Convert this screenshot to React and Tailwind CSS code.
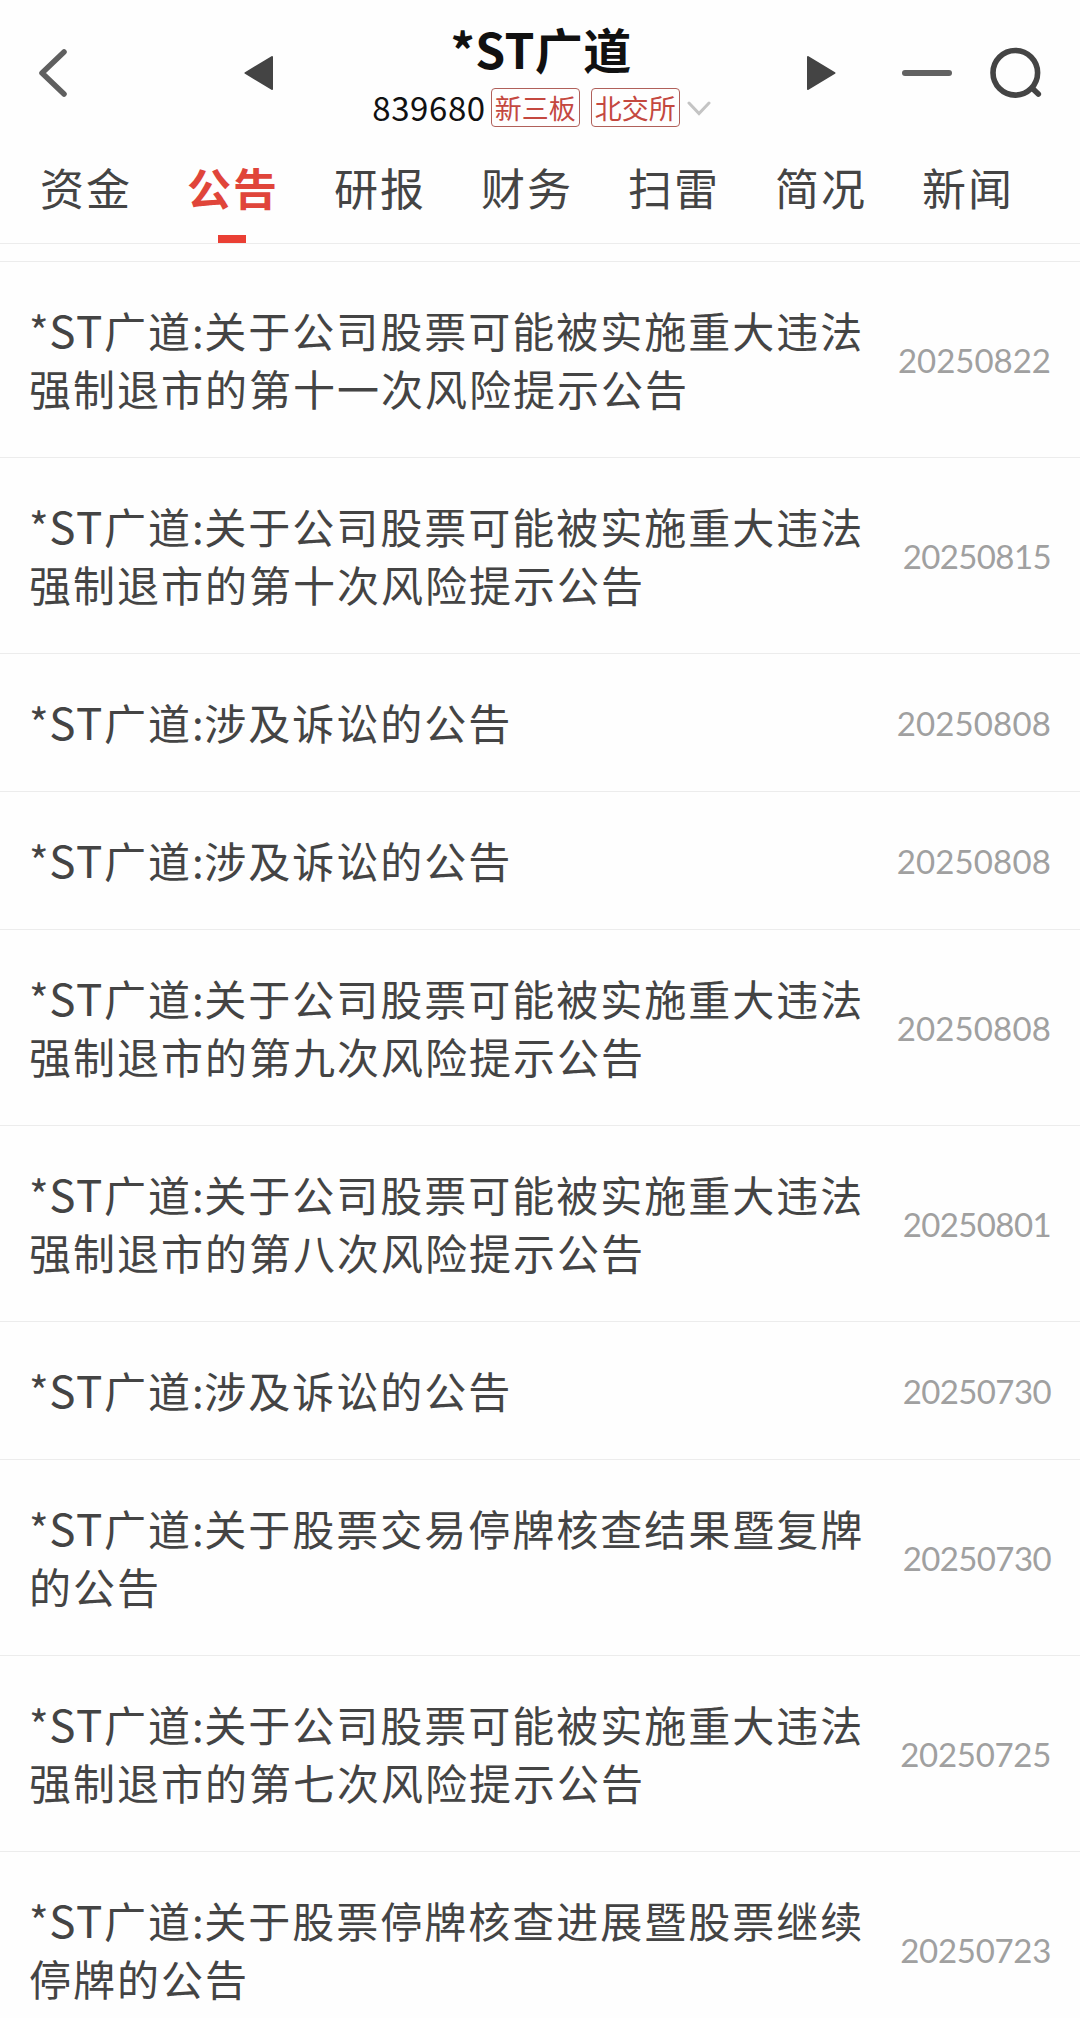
import { useState } from "react";

const TABS = ["资金", "公告", "研报", "财务", "扫雷", "简况", "新闻"];

const NOTICES = [
  { id: 1, lines: ["关于公司股票可能被实施重大违法", "强制退市的第十一次风险提示公告"], date: "20250822", spacing: "tracking-[0px]" },
  { id: 2, lines: ["关于公司股票可能被实施重大违法", "强制退市的第十次风险提示公告"], date: "20250815", spacing: "tracking-[-0.6px]" },
  { id: 3, lines: ["涉及诉讼的公告"], date: "20250808", spacing: "tracking-[0.15px]" },
  { id: 4, lines: ["涉及诉讼的公告"], date: "20250808", spacing: "tracking-[0.15px]" },
  { id: 5, lines: ["关于公司股票可能被实施重大违法", "强制退市的第九次风险提示公告"], date: "20250808", spacing: "tracking-[0.15px]" },
  { id: 6, lines: ["关于公司股票可能被实施重大违法", "强制退市的第八次风险提示公告"], date: "20250801", spacing: "tracking-[-0.6px]" },
  { id: 7, lines: ["涉及诉讼的公告"], date: "20250730", spacing: "tracking-[-0.6px]" },
  { id: 8, lines: ["关于股票交易停牌核查结果暨复牌", "的公告"], date: "20250730", spacing: "tracking-[-0.6px]" },
  { id: 9, lines: ["关于公司股票可能被实施重大违法", "强制退市的第七次风险提示公告"], date: "20250725", spacing: "tracking-[-0.3px]" },
  { id: 10, lines: ["关于股票停牌核查进展暨股票继续", "停牌的公告"], date: "20250723", spacing: "tracking-[-0.3px]" },
];

function Tag({ children }) {
  return (
    <span className="flex h-[39px] w-[89px] items-center justify-center rounded-[4px] border border-[#b0605a]
                     text-[27px] leading-none whitespace-nowrap text-[#c4483f]">
      {children}
    </span>
  );
}

function Header() {
  return (
    <header className="flex h-[145px] items-center">
      <button className="ml-9">
        <svg width="36" height="52" viewBox="0 0 36 52" fill="none" stroke="#5f5f5f" strokeWidth="5.5"
             strokeLinecap="round" strokeLinejoin="round">
          <path d="M28 5 L6 26 L28 47" />
        </svg>
      </button>
      <button className="ml-[171px]">
        <svg width="32" height="36" viewBox="0 0 32 36" fill="#444" stroke="#444" strokeWidth="2" strokeLinejoin="round">
          <path d="M29 2 L2.5 18 L29 34 Z" />
        </svg>
      </button>

      {/* Stock name, code and market */}
      <div className="flex flex-1 flex-col items-center pt-1">
        <h1 className="pl-0.5 text-[48px] leading-[52px] font-bold tracking-[0.4px] whitespace-nowrap text-[#111]">
          *ST广道
        </h1>
        <div className="mt-3.5 flex items-center pl-[3px]">
          <span className="mr-[5px] text-[33px] leading-[39px] tracking-[0.6px] text-[#111]">839680</span>
          <Tag>新三板</Tag>
          <span className="w-[11px]" />
          <Tag>北交所</Tag>
          <svg className="ml-[7px]" width="24" height="18" viewBox="0 0 24 18" fill="none" stroke="#c4c4c4"
               strokeWidth="3" strokeLinecap="round">
            <path d="M2 4 L12 14.5 L22 4" />
          </svg>
        </div>
      </div>

      <button>
        <svg width="32" height="36" viewBox="0 0 32 36" fill="#444" stroke="#444" strokeWidth="2" strokeLinejoin="round">
          <path d="M3 2 L29.5 18 L3 34 Z" />
        </svg>
      </button>
      <span className="ml-[65px] h-1.5 w-[50px] rounded-full bg-[#626262]" />
      <button className="mr-[37px] ml-[35px]">
        <svg width="56" height="56" viewBox="0 0 56 56" fill="none" stroke="#444" strokeWidth="5.6" strokeLinecap="round">
          <circle cx="28.3" cy="27.8" r="22.3" />
          <path d="M45.5 43.5 L51.3 49" />
        </svg>
      </button>
    </header>
  );
}

export default function App() {
  const [active, setActive] = useState("公告");

  return (
    <div className="h-[2018px] w-[1080px] overflow-hidden bg-[#fefefe] font-['Noto_Sans_CJK_SC',sans-serif]">
      <Header />

      <nav className="flex h-[99px] border-b border-[#ececec] px-3">
        {TABS.map((tab) => (
          <button
            key={tab}
            onClick={() => setActive(tab)}
            className={`flex w-[147px] flex-col items-center justify-between pt-[11px] text-[44px] leading-[62px] tracking-[2px]
                        ${tab === active ? "font-bold text-[#e0453a]" : "text-[#444]"}`}
          >
            <span className="pl-px">{tab}</span>
            {tab === active && <span className="mr-px h-2 w-7 bg-[#ea3f34]" />}
          </button>
        ))}
      </nav>

      <ul className="mt-[17px] border-t border-[#ececec]">
        {NOTICES.map(({ id, lines, date, spacing }) => (
          <li
            key={id}
            className="flex items-center justify-between border-b border-[#ececec] pt-[39px] pr-[29px] pb-10 pl-[29px]"
          >
            <p className="text-[42px] leading-[58px] tracking-[2px] whitespace-nowrap text-[#444]">
              <span className="tracking-[0.5px]">*</span>
              <span className="text-[44px] leading-none tracking-[1.6px]">ST</span>
              广道
              <span className="tracking-[0.5px]">:</span>
              {lines[0]}
              {lines[1] && <br />}
              {lines[1]}
            </p>
            <time className={`pt-0.5 font-['Lato',sans-serif] text-[33px] leading-none text-[#a0a0a0] ${spacing}`}>
              {date}
            </time>
          </li>
        ))}
      </ul>
    </div>
  );
}
